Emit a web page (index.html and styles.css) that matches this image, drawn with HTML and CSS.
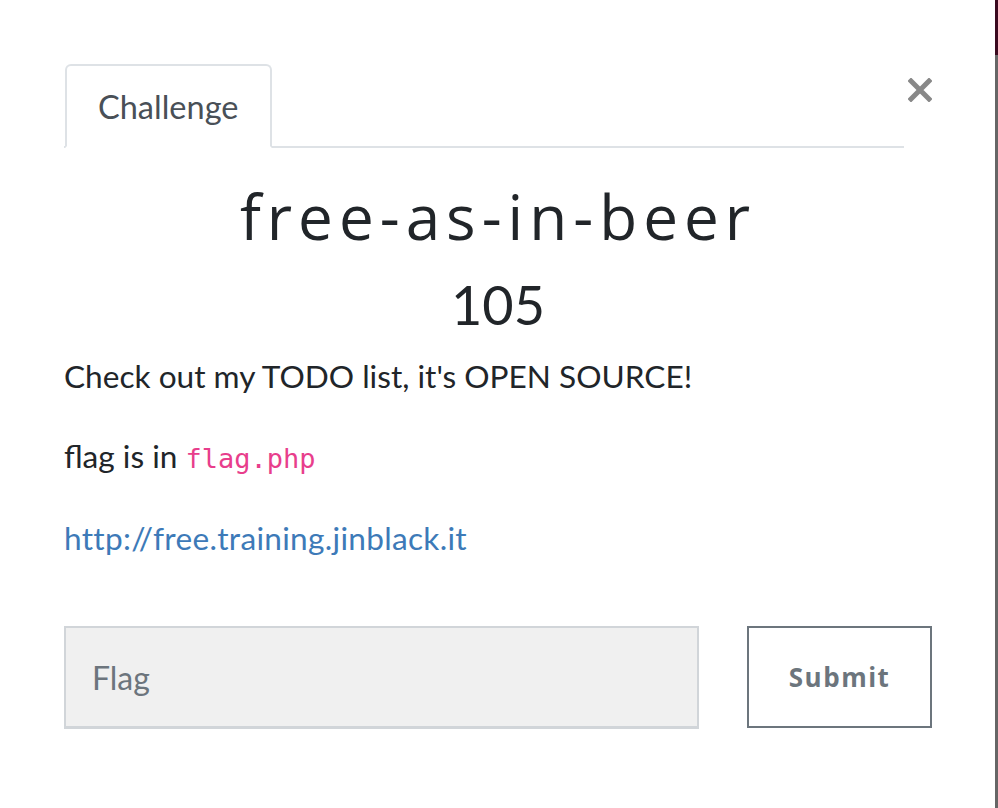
FILE: index.html
```html
<!DOCTYPE html>
<html>
<head>
<meta charset="utf-8">
<link rel="stylesheet" href="styles.css">
</head>
<body>
<div class="modal">
  <div class="header">
    <ul class="tabs">
      <li class="tab">Challenge</li>
    </ul>
    <button class="close" aria-label="Close">
      <svg width="24" height="24" viewBox="0 0 24 24"><path d="M3 3 L21 21 M21 3 L3 21" stroke="#888" stroke-width="5" stroke-linecap="square"/></svg>
    </button>
  </div>
  <h2 class="title">free-as-in-beer</h2>
  <h3 class="value">105</h3>
  <div class="desc">
    <p>Check out my TODO list, it's OPEN SOURCE!</p>
    <p>flag is in <code>flag.php</code></p>
    <p><a class="link" href="#">http://free.training.jinblack.it</a></p>
  </div>
  <form class="submit-row">
    <input class="flag-input" type="text" placeholder="Flag">
    <button class="submit" type="button">Submit</button>
  </form>
</div>
<div class="edge"><div class="edge-top"></div></div>
</body>
</html>
```
FILE: styles.css
```css
html, body {
  margin: 0;
  padding: 0;
  background: #fff;
  height: 100%;
}
body {
  font-family: Lato, "Liberation Sans", sans-serif;
  color: #212529;
  position: relative;
  overflow: hidden;
}
.modal {
  padding: 64px 66px 0 64px;
}
.header {
  display: flex;
  align-items: flex-start;
}
.tabs {
  flex: 1;
  list-style: none;
  margin: 0;
  padding: 0 0 0 1px;
  display: flex;
  border-bottom: 2px solid #dee2e6;
}
.tab {
  margin-bottom: -2px;
  box-sizing: border-box;
  height: 84px;
  width: 207px;
  padding: 0 0 0 31px;
  line-height: 82px;
  font-size: 32.5px;
  color: #495057;
  border: 2px solid #dee2e6;
  border-bottom-color: #fff;
  border-radius: 6px 6px 0 0;
}
.close {
  width: 28px;
  background: none;
  border: 0;
  padding: 0;
  margin-top: 14px;
  display: flex;
  justify-content: flex-end;
}
.title {
  margin: 28px 0 0;
  text-align: center;
  font-family: "Open Sans", Lato, sans-serif;
  font-weight: 400;
  font-size: 62px;
  line-height: 80px;
  letter-spacing: 6px;
}
.value {
  margin: 16px 0 0;
  text-align: center;
  font-weight: 400;
  font-size: 54px;
  line-height: 66px;
}
.desc {
  margin-top: 15px;
  font-size: 31.6px;
  line-height: 47px;
}
.desc p {
  margin: 0 0 33px;
}
code {
  font-family: "DejaVu Sans Mono", "Liberation Mono", monospace;
  color: #e83e8c;
  font-size: 27px;
}
.link {
  color: #3d7ab8;
  text-decoration: none;
  letter-spacing: 0.3px;
}
.submit-row {
  display: flex;
  gap: 48px;
  margin-top: 64px;
}
.flag-input {
  box-sizing: border-box;
  width: 636px;
  height: 103px;
  background: #f0f0f0;
  border: 2px solid #d1d5d9;
  border-bottom-width: 3px;
  padding: 0 26px;
  font-family: Lato, "Liberation Sans", sans-serif;
  font-size: 32px;
  color: #495057;
  outline: none;
}
.flag-input::placeholder {
  color: #6c757d;
}
.submit {
  box-sizing: border-box;
  width: 185px;
  height: 102px;
  background: #fff;
  border: 2px solid #6c757d;
  font-family: "Open Sans", sans-serif;
  font-weight: 700;
  font-size: 26px;
  letter-spacing: 1.5px;
  color: #6c757d;
}
.edge {
  position: absolute;
  top: 0;
  right: 0;
  width: 3px;
  height: 100%;
  background: #666;
}
.edge-top {
  height: 55px;
  background: #3b0a1f;
}
```
